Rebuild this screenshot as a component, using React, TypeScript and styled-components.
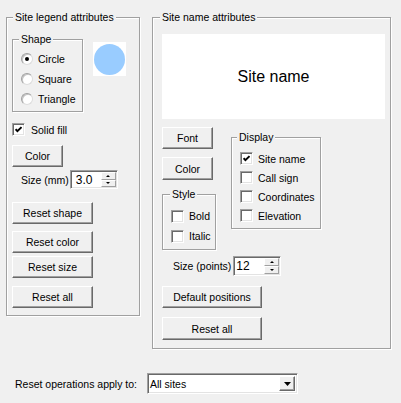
import styled, { createGlobalStyle } from "styled-components";

const GlobalStyle = createGlobalStyle`
  * { box-sizing: border-box; }
  html, body { margin: 0; padding: 0; background: #f0f0f0; }
  body {
    font-family: "Liberation Sans", Arial, sans-serif;
    font-size: 10.5px;
    color: #000;
  }
`;

const Dialog = styled.div`
  width: 401px;
  height: 403px;
  padding-top: 17px;
  overflow: hidden;
  background: #f0f0f0;
`;

const TopRow = styled.div`
  display: flex;
  align-items: flex-start;
  gap: 12px;
  padding-left: 6px;
`;

const Group = styled.div<{ $width: number }>`
  width: ${(p) => p.$width}px;
  flex: none;
  border: 1px solid #a0a0a0;
  box-shadow: inset 1px 1px 0 #fff, 1px 1px 0 #fff;
`;

const Caption = styled.div<{ $indent: number }>`
  width: fit-content;
  height: 13px;
  line-height: 13px;
  margin: -7px 0 0 ${(p) => p.$indent}px;
  padding: 0 2px;
  background: #f0f0f0;
  white-space: nowrap;
`;

const Column = styled.div<{ $left: number; $bottom: number }>`
  display: flex;
  flex-direction: column;
  align-items: flex-start;
  padding: 0 0 ${(p) => p.$bottom}px ${(p) => p.$left}px;
`;

const ShapeRow = styled.div`
  display: flex;
  align-items: flex-start;
  margin-top: 15px;
`;

const OptionList = styled.div<{ $top: number; $bottom: number }>`
  display: flex;
  flex-direction: column;
  margin-top: ${(p) => p.$top}px;
  padding-bottom: ${(p) => p.$bottom}px;
`;

const OptionRow = styled.label<{ $h: number }>`
  display: flex;
  align-items: center;
  gap: 5px;
  height: ${(p) => p.$h}px;
  padding-left: 8px;
  white-space: nowrap;
`;

const RadioDot = styled.span<{ $on?: boolean }>`
  position: relative;
  width: 12px;
  height: 12px;
  flex: none;
  border-radius: 50%;
  background: #fff;
  border: 1px solid;
  border-color: #a0a0a0 #dcdcdc #dcdcdc #a0a0a0;
  box-shadow: inset 1px 1px 0 #c4c4c4;
  &::after {
    content: "";
    display: ${(p) => (p.$on ? "block" : "none")};
    position: absolute;
    left: 3px;
    top: 3px;
    width: 4px;
    height: 4px;
    border-radius: 50%;
    background: #000;
  }
`;

const Box = styled.span`
  width: 13px;
  height: 13px;
  flex: none;
  display: flex;
  align-items: center;
  justify-content: center;
  background: #fff;
  border: 1px solid;
  border-color: #a0a0a0 #fff #fff #a0a0a0;
  box-shadow: inset 1px 1px 0 #696969, inset -1px -1px 0 #e3e3e3;
`;

const Tick = () => (
  <svg width="7" height="7" viewBox="0 0 7 7">
    <polyline points="0.6,3.2 2.4,5.2 6.5,1.1" fill="none" stroke="#000" strokeWidth="1.9" />
  </svg>
);

const Check = ({ on }: { on?: boolean }) => <Box>{on && <Tick />}</Box>;

const SymbolPreview = styled.div`
  width: 33px;
  height: 34px;
  margin: 3px 0 0 10px;
  background: #fff;
  display: flex;
  align-items: center;
  justify-content: center;
`;

const Dot = styled.div`
  width: 31px;
  height: 31px;
  border-radius: 50%;
  background: #99ccff;
`;

const SolidRow = styled.label`
  display: flex;
  align-items: center;
  gap: 6px;
  height: 13px;
  margin-top: 11px;
`;

const Button = styled.button<{ $w: number; $h: number; $top: number }>`
  display: flex;
  align-items: center;
  justify-content: center;
  width: ${(p) => p.$w}px;
  height: ${(p) => p.$h}px;
  margin-top: ${(p) => p.$top}px;
  padding: 0;
  font: inherit;
  color: #000;
  background: #f0f0f0;
  border: 1px solid;
  border-color: #fff #696969 #696969 #fff;
  box-shadow: inset -1px -1px 0 #a0a0a0;
  outline: none;
`;

const SizeRow = styled.div<{ $top: number; $left: number; $gap: number }>`
  display: flex;
  align-items: center;
  gap: ${(p) => p.$gap}px;
  margin: ${(p) => p.$top}px 0 0 ${(p) => p.$left}px;
  white-space: nowrap;
`;

const SpinEdit = styled.div<{ $h: number }>`
  display: flex;
  width: 48px;
  height: ${(p) => p.$h}px;
  background: #fff;
  border: 1px solid;
  border-color: #a0a0a0 #fff #fff #a0a0a0;
  box-shadow: inset 1px 1px 0 #696969, inset -1px -1px 0 #e3e3e3;
  padding: 1px;
`;

const SpinValue = styled.span<{ $pad: number }>`
  flex: 1;
  display: flex;
  align-items: center;
  padding-left: ${(p) => p.$pad}px;
  font-size: 12px;
`;

const SpinButtons = styled.div`
  display: flex;
  flex-direction: column;
  width: 15px;
`;

const SpinHalf = styled.div`
  flex: 1;
  display: flex;
  align-items: center;
  justify-content: center;
  background: #f0f0f0;
  border: 1px solid;
  border-color: #fff #a0a0a0 #a0a0a0 #fff;
`;

const Arrow = styled.span<{ $up?: boolean }>`
  width: 0;
  height: 0;
  border-left: 2px solid transparent;
  border-right: 2px solid transparent;
  ${(p) => (p.$up ? "border-bottom: 2px solid #000;" : "border-top: 2px solid #000;")}
`;

const Spinner = ({ value, h, pad }: { value: string; h: number; pad: number }) => (
  <SpinEdit $h={h}>
    <SpinValue $pad={pad}>{value}</SpinValue>
    <SpinButtons>
      <SpinHalf>
        <Arrow $up />
      </SpinHalf>
      <SpinHalf>
        <Arrow />
      </SpinHalf>
    </SpinButtons>
  </SpinEdit>
);

const NamePreview = styled.div`
  width: 223px;
  height: 85px;
  margin-top: 10px;
  background: #fff;
  display: flex;
  align-items: center;
  justify-content: center;
  font-size: 16px;
`;

const ControlsRow = styled.div`
  display: flex;
  align-items: flex-start;
`;

const SubColumn = styled.div`
  display: flex;
  flex-direction: column;
  align-items: flex-start;
`;

const DisplayGroup = styled(Group)`
  margin: 18px 0 0 15px;
`;

const StyleGroup = styled(Group)`
  margin-top: 14px;
`;

const BottomRow = styled.div`
  display: flex;
  align-items: center;
  margin-top: 24px;
  padding-left: 15px;
`;

const BottomLabel = styled.span`
  width: 132px;
  flex: none;
  white-space: nowrap;
`;

const Combo = styled.div`
  display: flex;
  width: 151px;
  height: 21px;
  background: #fff;
  border: 1px solid;
  border-color: #a0a0a0 #fff #fff #a0a0a0;
  box-shadow: inset 1px 1px 0 #696969, inset -1px -1px 0 #e3e3e3;
  padding: 2px;
`;

const ComboText = styled.span`
  flex: 1;
  display: flex;
  align-items: center;
  padding-left: 0px;
`;

const ComboButton = styled.div`
  width: 16px;
  display: flex;
  align-items: center;
  justify-content: center;
  background: #f0f0f0;
  border: 1px solid;
  border-color: #fff #696969 #696969 #fff;
  box-shadow: inset -1px -1px 0 #a0a0a0;
`;

export default function App() {
  return (
    <Dialog>
      <GlobalStyle />
      <TopRow>
        <Group $width={134}>
          <Caption $indent={6}>Site legend attributes</Caption>
          <Column $left={5} $bottom={7}>
            <ShapeRow>
              <Group $width={71}>
                <Caption $indent={6}>Shape</Caption>
                <OptionList $top={3} $bottom={2}>
                  <OptionRow $h={20}>
                    <RadioDot $on />
                    Circle
                  </OptionRow>
                  <OptionRow $h={20}>
                    <RadioDot />
                    Square
                  </OptionRow>
                  <OptionRow $h={20}>
                    <RadioDot />
                    Triangle
                  </OptionRow>
                </OptionList>
              </Group>
              <SymbolPreview>
                <Dot />
              </SymbolPreview>
            </ShapeRow>
            <SolidRow>
              <Check on />
              Solid fill
            </SolidRow>
            <Button $w={51} $h={22} $top={9}>Color</Button>
            <SizeRow $top={3} $left={9} $gap={1}>
              Size (mm)
              <Spinner value="3.0" h={19} pad={4} />
            </SizeRow>
            <Button $w={81} $h={22} $top={13}>Reset shape</Button>
            <Button $w={81} $h={22} $top={7}>Reset color</Button>
            <Button $w={81} $h={22} $top={3}>Reset size</Button>
            <Button $w={81} $h={22} $top={8}>Reset all</Button>
          </Column>
        </Group>

        <Group $width={239}>
          <Caption $indent={7}>Site name attributes</Caption>
          <Column $left={9} $bottom={8}>
            <NamePreview>Site name</NamePreview>
            <ControlsRow>
              <SubColumn>
                <Button $w={51} $h={22} $top={8}>Font</Button>
                <Button $w={51} $h={23} $top={8}>Color</Button>
                <StyleGroup $width={54}>
                  <Caption $indent={7}>Style</Caption>
                  <OptionList $top={5} $bottom={3}>
                    <OptionRow $h={20}>
                      <Check />
                      Bold
                    </OptionRow>
                    <OptionRow $h={20}>
                      <Check />
                      Italic
                    </OptionRow>
                  </OptionList>
                </StyleGroup>
              </SubColumn>
              <DisplayGroup $width={90}>
                <Caption $indent={5}>Display</Caption>
                <OptionList $top={5} $bottom={3}>
                  <OptionRow $h={19}>
                    <Check on />
                    Site name
                  </OptionRow>
                  <OptionRow $h={19}>
                    <Check />
                    Call sign
                  </OptionRow>
                  <OptionRow $h={19}>
                    <Check />
                    Coordinates
                  </OptionRow>
                  <OptionRow $h={19}>
                    <Check />
                    Elevation
                  </OptionRow>
                </OptionList>
              </DisplayGroup>
            </ControlsRow>
            <SizeRow $top={6} $left={11} $gap={2}>
              Size (points)
              <Spinner value="12" h={20} pad={1} />
            </SizeRow>
            <Button $w={100} $h={22} $top={10}>Default positions</Button>
            <Button $w={100} $h={23} $top={9}>Reset all</Button>
          </Column>
        </Group>
      </TopRow>

      <BottomRow>
        <BottomLabel>Reset operations apply to:</BottomLabel>
        <Combo>
          <ComboText>All sites</ComboText>
          <ComboButton>
            <svg width="7" height="4" viewBox="0 0 7 4">
              <polygon points="0,0 7,0 3.5,4" fill="#000" />
            </svg>
          </ComboButton>
        </Combo>
      </BottomRow>
    </Dialog>
  );
}
